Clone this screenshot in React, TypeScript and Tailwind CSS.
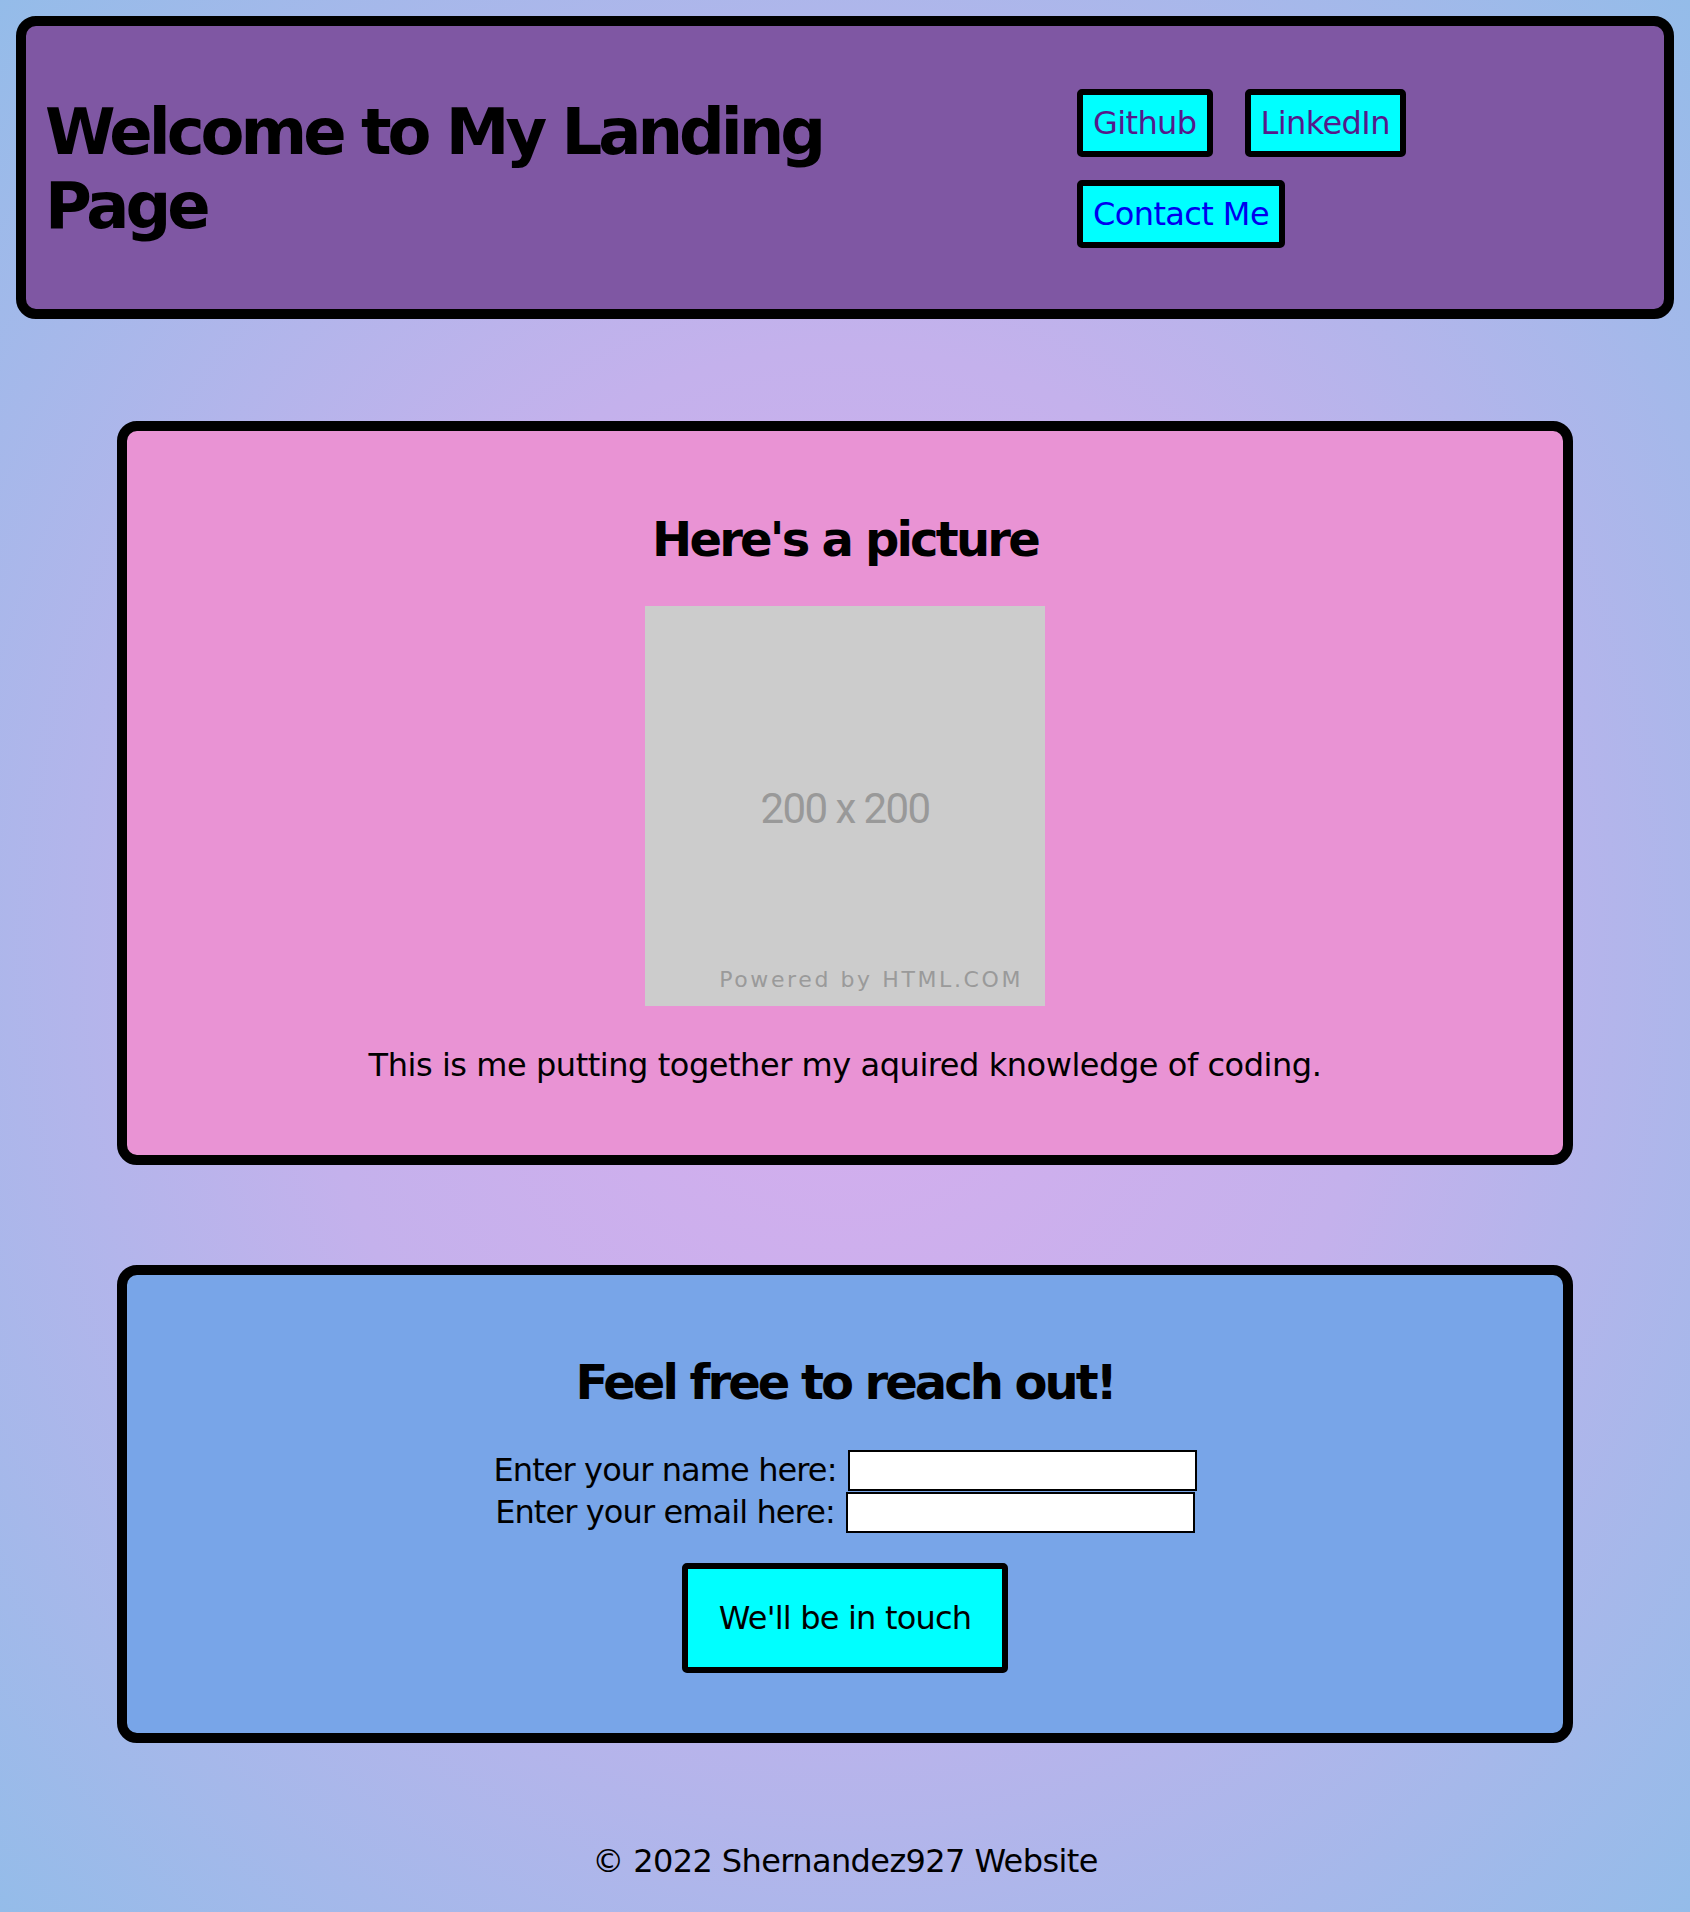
import React from 'react';

const font = { fontFamily: '"DejaVu Sans", "Liberation Sans", sans-serif' };

function NavButton({ label, visited }: { label: string; visited?: boolean }) {
  return (
    <a
      href="#"
      className={`block border-[6px] border-black rounded-[5px] bg-[#00ffff] px-[10px] py-[9px] text-[32px] leading-[38px] tracking-[-0.6px] ${
        visited ? 'text-[#551a8b]' : 'text-[#0000ee]'
      }`}
    >
      {label}
    </a>
  );
}

function Placeholder() {
  return (
    <div className="relative w-[400px] h-[400px] bg-[#cccccc] flex items-center justify-center pt-[4px]">
      <span className="text-[42px] text-[#999999] tracking-[-1.6px]" style={{ fontFamily: 'Roboto, "Liberation Sans", sans-serif' }}>
        200 x 200
      </span>
      <span className="absolute right-[22px] bottom-[10px] text-[22px] text-[#9a9a9a] tracking-[2.6px]">
        Powered by HTML.COM
      </span>
    </div>
  );
}

export default function App() {
  return (
    <div
      className="min-h-[1912px] p-[16px] bg-[radial-gradient(ellipse_at_center,#d7adee_0%,#c4b1ec_45%,#94bce9_100%)] text-black"
      style={font}
    >
      {/* Header */}
      <header className="h-[303px] flex border-[10px] border-black rounded-[20px] bg-[#7f57a3]">
        <div className="w-[1051px] pl-[19px] flex items-center pt-[2px]">
          <h1 className="max-w-[860px] text-[64px] leading-[74px] font-bold tracking-[-4px]">
            Welcome to My Landing Page
          </h1>
        </div>
        <nav className="pt-[63px] flex flex-col gap-[23px]">
          <div className="flex gap-[32px]">
            <NavButton label="Github" visited />
            <NavButton label="LinkedIn" visited />
          </div>
          <div className="flex">
            <NavButton label="Contact Me" />
          </div>
        </nav>
      </header>

      {/* Picture card */}
      <section className="mx-[101px] mt-[102px] border-[10px] border-black rounded-[20px] bg-[#e993d4] pt-[80px] pb-[71px] flex flex-col items-center">
        <h2 className="text-[48px] leading-[56px] font-bold tracking-[-2.8px]">Here's a picture</h2>
        <div className="mt-[39px]">
          <Placeholder />
        </div>
        <p className="mt-[41px] text-[32px] leading-[37px] tracking-[-0.45px]">
          This is me putting together my aquired knowledge of coding.
        </p>
      </section>

      {/* Contact card */}
      <section className="mx-[101px] mt-[100px] border-[10px] border-black rounded-[20px] bg-[#78a5e8] pt-[79px] pb-[60px] flex flex-col items-center">
        <h2 className="text-[48px] leading-[56px] font-bold tracking-[-3px]">Feel free to reach out!</h2>
        <form className="mt-[40px] flex flex-col items-center gap-[1px]">
          <label className="flex items-center gap-[11px] text-[32px] leading-[37px] tracking-[-0.9px]">
            Enter your name here:
            <input type="text" className="w-[349px] h-[41px] border-2 border-black bg-white" />
          </label>
          <label className="flex items-center gap-[11px] text-[32px] leading-[37px] tracking-[-0.9px]">
            Enter your email here:
            <input type="email" className="w-[349px] h-[41px] border-2 border-black bg-white" />
          </label>
        </form>
        <button
          type="button"
          className="mt-[30px] w-[326px] h-[110px] border-[6px] border-black rounded-[5px] bg-[#00ffff] text-[32px] tracking-[-0.8px]"
        >
          We'll be in touch
        </button>
      </section>

      {/* Footer */}
      <footer className="mt-[100px] text-center text-[32px] leading-[37px] tracking-[-0.6px]">
        © 2022 Shernandez927 Website
      </footer>
    </div>
  );
}
